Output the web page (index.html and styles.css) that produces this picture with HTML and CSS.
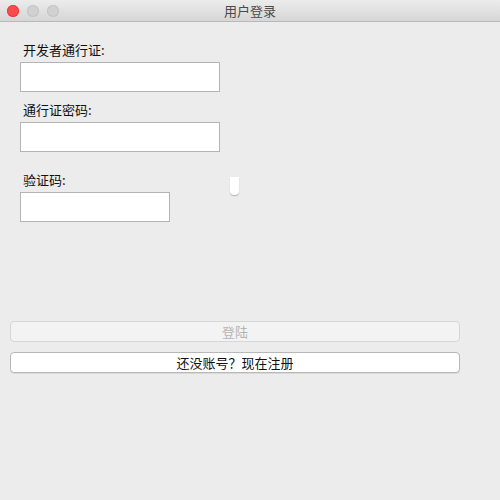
FILE: index.html
```html
<!DOCTYPE html>
<html lang="zh-CN">
<head>
    <meta charset="UTF-8">
    <title>用户登录</title>
    <link rel="stylesheet" href="styles.css">
</head>
<body>

    <!-- 标题栏 -->
    <div class="titlebar">
        <div class="lights">
            <span class="light close"></span>
            <span class="light"></span>
            <span class="light"></span>
        </div>
        <div class="title">用户登录</div>
    </div>

    <!-- 登录表单 -->
    <div class="window">
        <div class="form">
            <label class="field-label">开发者通行证:</label>
            <input type="text" class="field">

            <label class="field-label">通行证密码:</label>
            <input type="password" class="field">

            <div class="captcha-row">
                <div class="captcha-col">
                    <label class="field-label">验证码:</label>
                    <input type="text" class="field short">
                </div>
                <span class="captcha-img"></span>
            </div>
        </div>

        <div class="actions">
            <button class="btn" disabled>登陆</button>
            <button class="btn">还没账号？现在注册</button>
        </div>
    </div>

</body>
</html>
```

FILE: styles.css
```css
body, html {
    margin: 0;
    padding: 0;
    font-family: "Noto Sans CJK SC", "Liberation Sans", sans-serif;
    font-size: 13px;
    background-color: #ececec;
    color: #111;
    height: 100%;
}

/* 标题栏 */
.titlebar {
    height: 21px;
    border-bottom: 1px solid #b9b9b9;
    background: linear-gradient(#ececec, #d6d6d6);
    display: flex;
    align-items: center;
    position: relative;
}

.lights {
    display: flex;
    gap: 8px;
    padding-left: 7px;
}

.light {
    width: 12px;
    height: 12px;
    border-radius: 50%;
    background-color: #d1d1d1;
    box-shadow: inset 0 0 0 1px #c4c4c4;
}

.light.close {
    background-color: #fc4b4b;
    box-shadow: inset 0 0 0 1px #e2403f;
}

.title {
    position: absolute;
    left: 0;
    right: 0;
    text-align: center;
    color: #4a4a4a;
    line-height: 21px;
    pointer-events: none;
}

/* 表单区域 */
.window {
    padding: 0 40px 0 10px;
}

.form {
    display: flex;
    flex-direction: column;
    padding: 19px 0 0 10px;
}

.field-label {
    display: block;
    line-height: 18px;
    padding-left: 3px;
    margin-bottom: 3px;
}

.field {
    box-sizing: border-box;
    width: 200px;
    height: 30px;
    border: 1px solid #b4b4b4;
    background: white;
    margin: 0 0 9px 0;
    padding: 0;
    outline: none;
}

.field.short {
    width: 150px;
}

.captcha-row {
    display: flex;
    align-items: flex-start;
    margin-top: 10px;
}

.captcha-img {
    width: 9px;
    height: 18px;
    margin: 6px 0 0 60px;
    background: white;
    border-radius: 0 0 4px 4px;
    box-shadow: 0 1px 1px rgba(0, 0, 0, 0.25);
}

/* 按钮 */
.actions {
    display: flex;
    flex-direction: column;
    gap: 10px;
    margin-top: 90px;
}

.btn {
    height: 21px;
    width: 450px;
    font-family: inherit;
    font-size: 13px;
    line-height: 19px;
    padding: 0;
    background: white;
    border: 1px solid #b8b8b8;
    border-radius: 4px;
    color: #111;
    box-shadow: 0 1px 0 rgba(0, 0, 0, 0.08);
}

.btn:disabled {
    background: #f3f3f3;
    border-color: #d6d6d6;
    color: #b3b3b3;
    box-shadow: none;
}
```
